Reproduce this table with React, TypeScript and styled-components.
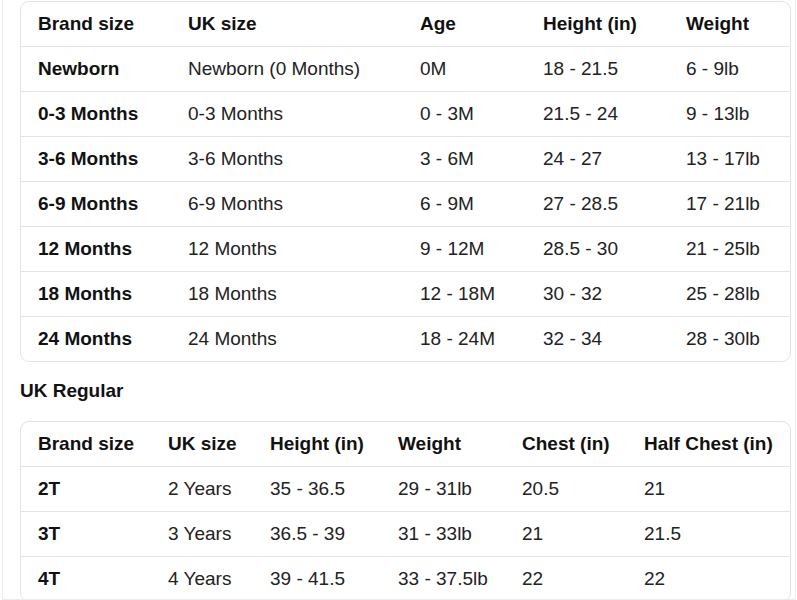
import styled, { createGlobalStyle } from "styled-components";

const GlobalStyle = createGlobalStyle`
  html, body {
    margin: 0;
    padding: 0;
    background: #ffffff;
  }
  body {
    font-family: "Liberation Sans", Arial, sans-serif;
    color: #111111;
  }
`;

const Page = styled.div`
  box-sizing: border-box;
  height: 600px;
  margin: 0 1px 0 2px;
  padding: 1px 4px 0 17px;
  border: 1px solid #ececec;
  border-top: none;
  overflow: hidden;
`;

const TableCard = styled.div`
  border: 1px solid #e3e3e3;
  border-radius: 9px;
  overflow: hidden;
`;

const Table = styled.table`
  width: 100%;
  table-layout: fixed;
  border-collapse: separate;
  border-spacing: 0;
  font-size: 19px;
`;

const Col = styled.col<{ $w: number }>`
  width: ${(p) => p.$w}px;
`;

const Row = styled.tr`
  & > th,
  & > td {
    box-sizing: border-box;
    height: 45px;
    border-bottom: 1px solid #e3e3e3;
  }
  tbody &:last-child > td {
    border-bottom: none;
    height: 44px;
  }
`;

const HeadCell = styled.th`
  padding: 0 0 0 17px;
  text-align: left;
  font-weight: 700;
  white-space: nowrap;
`;

const Cell = styled.td<{ $bold?: boolean }>`
  padding: 0 0 0 17px;
  text-align: left;
  white-space: nowrap;
  font-weight: ${(p) => (p.$bold ? 700 : 400)};
  color: ${(p) => (p.$bold ? "#111111" : "#222222")};
`;

const SectionTitle = styled.h3`
  margin: 0;
  padding: 17px 0 18px 0;
  font-size: 19px;
  line-height: 24px;
  font-weight: 700;
`;

type SizeTable = {
  widths: number[];
  head: string[];
  rows: string[][];
};

const babySizes: SizeTable = {
  widths: [150, 232, 123, 143, 122],
  head: ["Brand size", "UK size", "Age", "Height (in)", "Weight"],
  rows: [
    ["Newborn", "Newborn (0 Months)", "0M", "18 - 21.5", "6 - 9lb"],
    ["0-3 Months", "0-3 Months", "0 - 3M", "21.5 - 24", "9 - 13lb"],
    ["3-6 Months", "3-6 Months", "3 - 6M", "24 - 27", "13 - 17lb"],
    ["6-9 Months", "6-9 Months", "6 - 9M", "27 - 28.5", "17 - 21lb"],
    ["12 Months", "12 Months", "9 - 12M", "28.5 - 30", "21 - 25lb"],
    ["18 Months", "18 Months", "12 - 18M", "30 - 32", "25 - 28lb"],
    ["24 Months", "24 Months", "18 - 24M", "32 - 34", "28 - 30lb"],
  ],
};

const regularSizes: SizeTable = {
  widths: [130, 102, 128, 124, 122, 164],
  head: ["Brand size", "UK size", "Height (in)", "Weight", "Chest (in)", "Half Chest (in)"],
  rows: [
    ["2T", "2 Years", "35 - 36.5", "29 - 31lb", "20.5", "21"],
    ["3T", "3 Years", "36.5 - 39", "31 - 33lb", "21", "21.5"],
    ["4T", "4 Years", "39 - 41.5", "33 - 37.5lb", "22", "22"],
  ],
};

function SizeChart({ data }: { data: SizeTable }) {
  return (
    <TableCard>
      <Table>
        <colgroup>
          {data.widths.map((w, i) => (
            <Col key={i} $w={w} />
          ))}
        </colgroup>
        <thead>
          <Row>
            {data.head.map((h) => (
              <HeadCell key={h}>{h}</HeadCell>
            ))}
          </Row>
        </thead>
        <tbody>
          {data.rows.map((r) => (
            <Row key={r[0]}>
              {r.map((c, i) => (
                <Cell key={i} $bold={i === 0}>
                  {c}
                </Cell>
              ))}
            </Row>
          ))}
        </tbody>
      </Table>
    </TableCard>
  );
}

export default function App() {
  return (
    <>
      <GlobalStyle />
      <Page>
        <SizeChart data={babySizes} />
        <SectionTitle>UK Regular</SectionTitle>
        <SizeChart data={regularSizes} />
      </Page>
    </>
  );
}
